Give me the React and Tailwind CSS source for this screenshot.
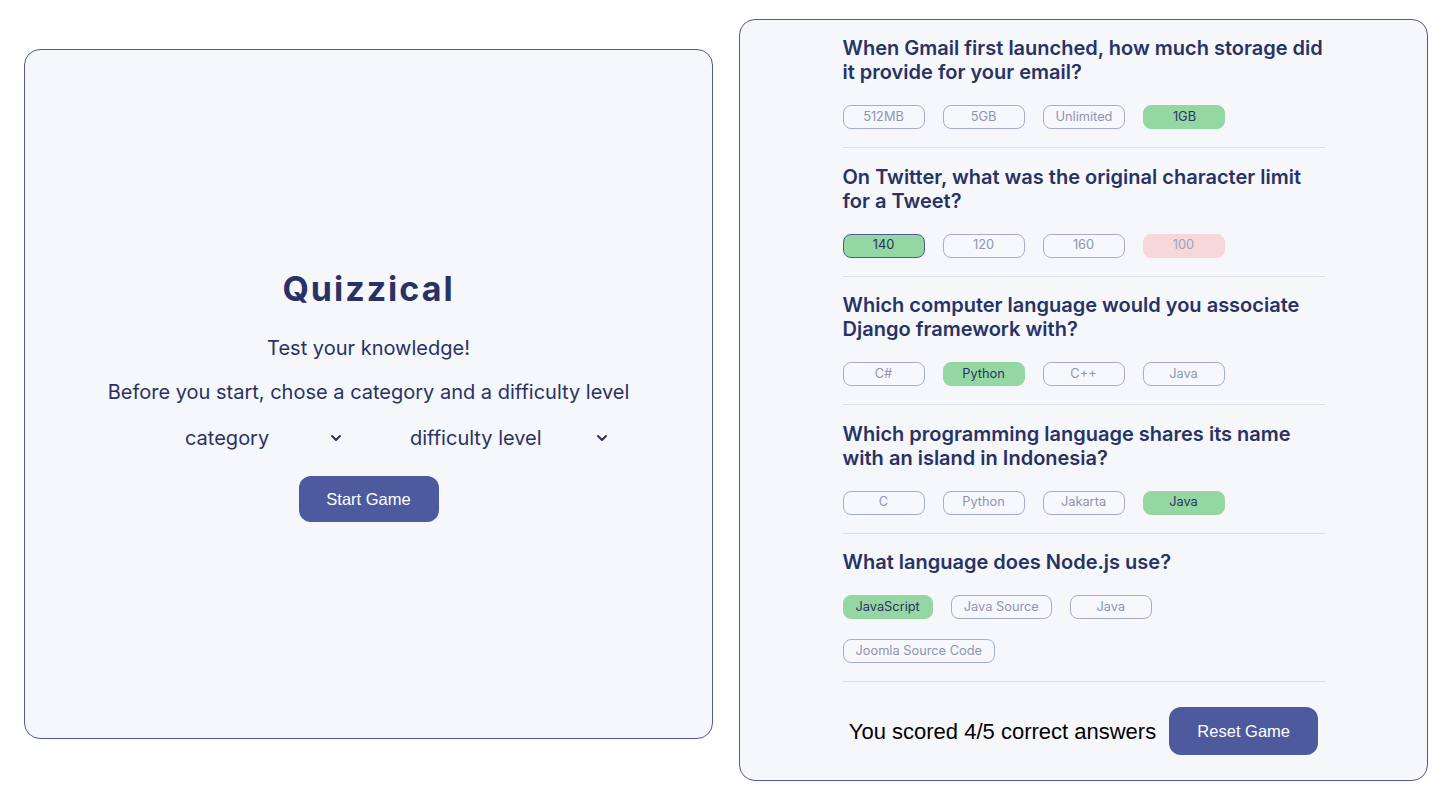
import { ChevronDown } from 'lucide-react';

const questions = [
    {
        text: 'When Gmail first launched, how much storage did it provide for your email?',
        answers: [
            { label: '512MB' },
            { label: '5GB' },
            { label: 'Unlimited' },
            { label: '1GB', state: 'correct' },
        ],
    },
    {
        text: 'On Twitter, what was the original character limit for a Tweet?',
        answers: [
            { label: '140', state: 'picked' },
            { label: '120' },
            { label: '160' },
            { label: '100', state: 'wrong' },
        ],
    },
    {
        text: 'Which computer language would you associate Django framework with?',
        answers: [
            { label: 'C#' },
            { label: 'Python', state: 'correct' },
            { label: 'C++' },
            { label: 'Java' },
        ],
    },
    {
        text: 'Which programming language shares its name with an island in Indonesia?',
        answers: [
            { label: 'C' },
            { label: 'Python' },
            { label: 'Jakarta' },
            { label: 'Java', state: 'correct' },
        ],
    },
    {
        text: 'What language does Node.js use?',
        answers: [
            { label: 'JavaScript', state: 'correct' },
            { label: 'Java Source' },
            { label: 'Java' },
            { label: 'Joomla Source Code' },
        ],
    },
];

const answerClass = {
    correct: 'bg-[#94d7a2] border-[#94d7a2] text-[#293264]',
    picked: 'bg-[#94d7a2] border-[#4d5b9e] text-[#293264]',
    wrong: 'bg-[#f8d7da] border-[#f8d7da] text-[#9ea0bd]',
    none: 'bg-[#f7f8fc] border-[#a5acd6] text-[#8f93b5]',
};

const Answer = ({ label, state = 'none' }) => (
    <button
        className={`h-6 min-w-[82px] mr-[18px] px-3 rounded-lg border text-[12.8px] leading-none ${answerClass[state]}`}
    >
        {label}
    </button>
);

const Select = ({ label, width }) => (
    <div className={`flex items-center justify-between pl-[10px] pr-[6px] h-8 ${width}`}>
        <span className="text-[20px] text-[#293264]">{label}</span>
        <ChevronDown size={16} strokeWidth={3} className="text-[#293264]" />
    </div>
);

const App = () => {
    return (
        <div className="min-h-screen bg-white flex items-start gap-[26px] pl-6 pr-7 pt-[19px]" style={{ fontFamily: 'Inter, "Noto Sans", sans-serif' }}>
            <div className="mt-[30px] w-[689px] h-[690px] shrink-0 bg-[#f5f7fb] border border-[#4d5b9e] rounded-2xl flex flex-col items-center justify-center pt-[6px]">
                <h1 className="text-[34px] font-bold tracking-[2px] text-[#293264] leading-none">Quizzical</h1>
                <p className="mt-[30px] text-[20px] text-[#293264] leading-6">Test your knowledge!</p>
                <p className="mt-5 text-[20px] text-[#293264] leading-6">Before you start, chose a category and a difficulty level</p>
                <div className="mt-[18px] ml-[54px] flex items-center gap-[50px]">
                    <Select label="category" width="w-[175px]" />
                    <Select label="difficulty level" width="w-[216px]" />
                </div>
                <button
                    className="mt-[22px] w-[140px] h-[46px] rounded-xl bg-[#4d5b9e] text-white text-[16.5px]"
                    style={{ fontFamily: '"Liberation Sans", Arial, sans-serif' }}
                >
                    Start Game
                </button>
            </div>

            <div className="w-[689px] h-[762px] shrink-0 bg-[#f5f7fb] border border-[#4d5b9e] rounded-2xl flex flex-col items-center pt-4">
                <div className="w-[482px]">
                    {questions.map((q, i) => (
                        <div key={i} className="border-b border-[#dbdef0] pb-[18px] mb-[16.5px]">
                            <h2 className="text-[20px] font-semibold text-[#293264] leading-6">{q.text}</h2>
                            <div className="mt-[21px] flex flex-wrap gap-y-5">
                                {q.answers.map((a) => (
                                    <Answer key={a.label} {...a} />
                                ))}
                            </div>
                        </div>
                    ))}
                    <div className="flex items-center justify-center gap-[13px] mt-[25px]" style={{ fontFamily: '"Liberation Sans", Arial, sans-serif' }}>
                        <p className="text-[22px] text-black">You scored 4/5 correct answers</p>
                        <button className="w-[149px] h-12 rounded-xl bg-[#4d5b9e] text-white text-[16.5px]">Reset Game</button>
                    </div>
                </div>
            </div>
        </div>
    );
};

export default App;
